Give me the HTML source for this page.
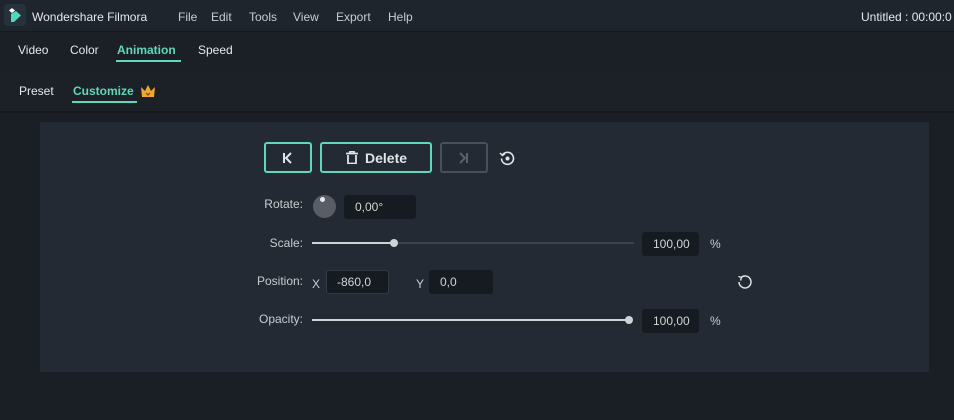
<!DOCTYPE html><html><head><style>
*{margin:0;padding:0;box-sizing:border-box}
body{width:954px;height:420px;overflow:hidden;background:#1a1f26;font-family:"Liberation Sans",sans-serif;color:#d8dcdf;font-size:12px;position:relative}
.a{position:absolute;white-space:nowrap}
.m{font-size:12px;color:#c8ccd0;top:10px}
.box{position:absolute;background:#161b21;border-radius:3px;color:#d0d4d8;font-size:12px;padding-left:11px;line-height:24px;height:24px}
.lbl{position:absolute;font-size:12px;color:#c8ccd0;text-align:right;width:60px}
</style></head><body>
<div class="a" style="left:0;top:0;width:954px;height:32px;background:#1f252d;border-bottom:1px solid #15191e"></div>
<div class="a" style="left:4px;top:4px;width:22px;height:22px;background:#26323b;border-radius:4px"></div>
<svg class="a" style="left:8px;top:7px" width="14" height="16" viewBox="0 0 14 16"><path d="M4 1 L7 3.5 L4 6 L1 3.5Z" fill="#fff"/><path d="M3 7 L8 4 L13 8.5 L6 15 L3 15Z" fill="#4fd8b9"/></svg>
<div class="a" style="left:32px;top:10px;font-size:12px;color:#e6e8ea">Wondershare Filmora</div>
<div class="a m" style="left:178px">File</div>
<div class="a m" style="left:211px">Edit</div>
<div class="a m" style="left:249px">Tools</div>
<div class="a m" style="left:293px">View</div>
<div class="a m" style="left:336px">Export</div>
<div class="a m" style="left:388px">Help</div>
<div class="a" style="left:861px;top:10px;font-size:12px;color:#e6e8ea">Untitled : 00:00:0</div>
<div class="a" style="left:0;top:33px;width:954px;height:39px;background:#1b2027"></div>
<div class="a" style="left:18px;top:43px;font-size:12px;color:#e6e8ea">Video</div>
<div class="a" style="left:70px;top:43px;font-size:12px;color:#e6e8ea">Color</div>
<div class="a" style="left:117px;top:43px;font-size:12px;color:#5fd8bb;font-weight:bold">Animation</div>
<div class="a" style="left:116px;top:60px;width:65px;height:2px;background:#5fd8bb"></div>
<div class="a" style="left:198px;top:43px;font-size:12px;color:#e6e8ea">Speed</div>
<div class="a" style="left:0;top:72px;width:954px;height:41px;background:#1c2128;border-bottom:2px solid #15191e"></div>
<div class="a" style="left:19px;top:84px;font-size:12px;color:#e6e8ea">Preset</div>
<div class="a" style="left:73px;top:84px;font-size:12px;color:#5fd8bb;font-weight:bold">Customize</div>
<div class="a" style="left:72px;top:101px;width:65px;height:2px;background:#5fd8bb"></div>
<svg class="a" style="left:140px;top:84px" width="16" height="14" viewBox="0 0 16 14"><path d="M1 3 L5 7 L8 1 L11 7 L15 3 L14 13 L2 13Z" fill="#f0a830"/><path d="M6 9 L8 11 L10 9" stroke="#8a4b10" stroke-width="1.3" fill="none"/></svg>
<div class="a" style="left:40px;top:122px;width:889px;height:250px;background:#232a33"></div>
<div class="a" style="left:264px;top:142px;width:48px;height:31px;border:2px solid #5fd8bb;border-radius:3px"></div>
<svg class="a" style="left:282px;top:152px" width="12" height="12" viewBox="0 0 12 12"><path d="M2 1V11M9 1L4 6L9 11" stroke="#e0e4e6" stroke-width="2" fill="none"/></svg>
<div class="a" style="left:320px;top:142px;width:112px;height:31px;border:2px solid #5fd8bb;border-radius:3px"></div>
<svg class="a" style="left:346px;top:151px" width="12" height="13" viewBox="0 0 12 13"><path d="M0 2.5H12M4 2.5V0.5H8V2.5M2 4V12.5H10V4" stroke="#e0e4e6" stroke-width="1.8" fill="none"/></svg>
<div class="a" style="left:365px;top:150px;font-size:14px;font-weight:bold;color:#e0e4e6">Delete</div>
<div class="a" style="left:440px;top:142px;width:48px;height:31px;border:2px solid #4a5058;border-radius:3px"></div>
<svg class="a" style="left:457px;top:152px" width="12" height="12" viewBox="0 0 12 12"><path d="M10 1V11M3 1L8 6L3 11" stroke="#5a6068" stroke-width="2" fill="none"/></svg>
<svg class="a" style="left:499px;top:150px" width="17" height="17" viewBox="0 0 17 17"><path d="M3.5 5A6 6 0 1 1 2.5 8.5" stroke="#e0e4e6" stroke-width="1.6" fill="none"/><path d="M1 3L3.5 5.5L6 3.5" stroke="#e0e4e6" stroke-width="1.5" fill="none"/><circle cx="8.5" cy="8.5" r="2" fill="#e0e4e6"/></svg>
<div class="lbl" style="left:243px;top:197px">Rotate:</div>
<div class="a" style="left:313px;top:195px;width:23px;height:23px;border-radius:50%;background:#595e66"></div>
<div class="a" style="left:320px;top:197px;width:5px;height:5px;border-radius:50%;background:#e8eaec"></div>
<div class="box" style="left:344px;top:195px;width:72px">0,00°</div>
<div class="lbl" style="left:243px;top:236px">Scale:</div>
<div class="a" style="left:312px;top:242px;width:322px;height:2px;background:#3d434b"></div>
<div class="a" style="left:312px;top:242px;width:82px;height:2px;background:#cfd3d6"></div>
<div class="a" style="left:390px;top:239px;width:8px;height:8px;border-radius:50%;background:#cfd3d6"></div>
<div class="box" style="left:642px;top:232px;width:57px">100,00</div>
<div class="a" style="left:710px;top:237px;color:#c8ccd0">%</div>
<div class="lbl" style="left:243px;top:274px">Position:</div>
<div class="a" style="left:312px;top:277px;color:#c8ccd0">X</div>
<div class="box" style="left:326px;top:270px;width:63px;border:1px solid #333a42;padding-left:10px;line-height:22px">-860,0</div>
<div class="a" style="left:416px;top:277px;color:#c8ccd0">Y</div>
<div class="box" style="left:429px;top:270px;width:64px">0,0</div>
<svg class="a" style="left:737px;top:274px" width="16" height="16" viewBox="0 0 16 16"><path d="M4 3.5A6 6 0 1 1 2 8" stroke="#e0e4e6" stroke-width="1.5" fill="none"/><path d="M1.5 2.5L4.5 3.5L3.5 6.5" stroke="#e0e4e6" stroke-width="1.4" fill="none"/></svg>
<div class="lbl" style="left:243px;top:312px">Opacity:</div>
<div class="a" style="left:312px;top:319px;width:318px;height:2px;background:#cfd3d6"></div>
<div class="a" style="left:625px;top:316px;width:8px;height:8px;border-radius:50%;background:#cfd3d6"></div>
<div class="box" style="left:642px;top:309px;width:57px">100,00</div>
<div class="a" style="left:710px;top:314px;color:#c8ccd0">%</div>
</body></html>
